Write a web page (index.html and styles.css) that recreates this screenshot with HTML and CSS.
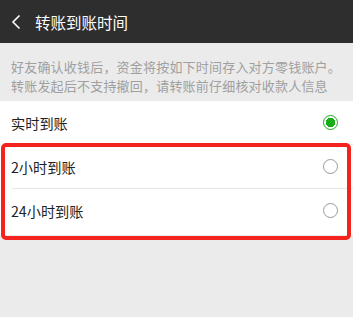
FILE: index.html
```html
<!DOCTYPE html>
<html lang="zh-CN">
<head>
    <meta charset="UTF-8">
    <meta name="viewport" content="width=device-width, initial-scale=1.0">
    <title>转账到账时间</title>
    <link rel="stylesheet" href="styles.css">
</head>
<body>
    <div class="header">
        <svg class="back-icon" width="10" height="16" viewBox="0 0 10 16">
            <path d="M8.5 1.5 L2 8 L8.5 14.5" fill="none" stroke="#fff" stroke-width="1.6"/>
        </svg>
        <span class="title">转账到账时间</span>
    </div>

    <p class="tips">好友确认收钱后，资金将按如下时间存入对方零钱账户。<br>转账发起后不支持撤回，请转账前仔细核对收款人信息</p>

    <div class="option-list">
        <div class="option-item">
            <span>实时到账</span>
            <span class="radio checked"></span>
        </div>
        <div class="marked">
            <div class="option-item">
                <span>2小时到账</span>
                <span class="radio"></span>
            </div>
            <div class="option-item">
                <span>24小时到账</span>
                <span class="radio"></span>
            </div>
        </div>
    </div>
</body>
</html>
```

FILE: styles.css
```css
body {
    font-family: "Noto Sans CJK SC", "Liberation Sans", sans-serif;
    background-color: #ebebeb;
    margin: 0;
    width: 353px;
    height: 317px;
    overflow: hidden;
}
.header {
    height: 43px;
    background-color: #2e2e2e;
    display: flex;
    align-items: center;
    padding-left: 11px;
}
.back-icon {
    margin-right: 14px;
}
.title {
    color: #fff;
    font-size: 15.5px;
}
.tips {
    margin: 0;
    padding: 14px 0 6px 11px;
    font-size: 13px;
    letter-spacing: 0.2px;
    line-height: 19px;
    color: #a0a0a0;
}
.option-list {
    background: #fff;
}
.marked {
    position: relative;
    padding-bottom: 3px;
}
.marked::after {
    content: "";
    position: absolute;
    left: 1px;
    right: 2px;
    top: -2px;
    bottom: -5px;
    border: 4.5px solid #f5231d;
    border-radius: 5px;
}
.option-item {
    height: 43px;
    margin-left: 12px;
    padding-right: 15px;
    display: flex;
    align-items: center;
    justify-content: space-between;
    font-size: 14.2px;
    color: #222;
    border-bottom: 1px solid #e6e6e6;
}
.option-item:last-child {
    border-bottom: none;
}
.option-item span:first-child {
    margin-left: -1px;
}
.radio {
    width: 13px;
    height: 13px;
    border: 1px solid #999;
    border-radius: 50%;
    box-sizing: content-box;
}
.radio.checked {
    border-color: #1aad19;
    background: radial-gradient(circle, #1aad19 0, #1aad19 4.5px, #fff 5px);
}
```
